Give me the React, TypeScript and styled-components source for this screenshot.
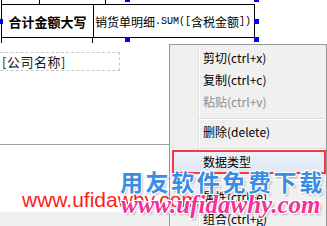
import React from 'react'
import styled, { createGlobalStyle, css } from 'styled-components'

const GlobalStyle = createGlobalStyle`
  html, body {
    margin: 0;
    padding: 0;
    background: #ffffff;
  }
  body {
    width: 327px;
    height: 226px;
    overflow: hidden;
    font-family: "Noto Sans CJK SC", sans-serif;
  }
`

const Page = styled.div`
  position: relative;
  width: 327px;
  height: 226px;
  overflow: hidden;
  background: #ffffff;
`

const Canvas = styled.div`
  display: flex;
  flex-direction: column;
  height: 100%;
`

const Table = styled.div`
  position: relative;
  margin-left: 1px;
  width: 254px;
`

const StubRow = styled.div`
  display: flex;
  height: ${(p: { $h: number }) => p.$h}px;
`

const Stub = styled.div`
  width: ${(p: { $w: number }) => p.$w}px;
  border-left: 1px solid #000;
  box-sizing: border-box;
`

const Row = styled.div`
  display: flex;
  height: 34px;
  box-sizing: border-box;
  border: 1px solid #000;
`

const Cell = styled.div`
  display: flex;
  align-items: center;
  color: #000;
  white-space: nowrap;
  ${(p: { $label?: boolean }) =>
    p.$label
      ? css`
          width: 91px;
          justify-content: center;
          border-right: 1px solid #000;
          font-size: 13px;
          font-weight: bold;
        `
      : css`
          flex: 1;
          padding-left: 1px;
          font-size: 12px;
        `}
`

const Half = styled.span`
  font-family: "Liberation Mono", monospace;
  font-size: 10px;
`

const Handle = styled.div`
  position: absolute;
  width: 5px;
  height: 5px;
  background: #0000ff;
  left: ${(p: { $x: number; $y: number }) => p.$x}px;
  top: ${(p: { $x: number; $y: number }) => p.$y}px;
`

const CompanyField = styled.div`
  display: flex;
  align-items: center;
  margin: 9px 0 0 -10px;
  padding-left: 11px;
  width: 130px;
  height: 19px;
  box-sizing: border-box;
  border: 1px dashed #c8c8c8;
  font-size: 13px;
  color: #1a1a1a;
  letter-spacing: 0.5px;
`

const Rule = styled.div`
  margin-top: 73px;
  border-top: 1px solid #a0a0a0;
`

const Blank = styled.div`
  flex: 1;
`

const StatusStrip = styled.div`
  height: 14px;
  background: #f0f0f0;
`

const Menu = styled.div`
  position: absolute;
  left: 169px;
  top: 44px;
  width: 158px;
  height: 200px;
  box-sizing: border-box;
  padding: 2px;
  background: #f0f0f0;
  border: 1px solid #979797;
  font-size: 12px;

  &::before {
    content: '';
    position: absolute;
    top: 2px;
    bottom: 2px;
    left: 28px;
    width: 1px;
    background: #e2e3e3;
    box-shadow: 1px 0 0 #ffffff;
  }
`

const Item = styled.div`
  position: relative;
  height: 22px;
  line-height: 22px;
  padding-left: 31px;
  white-space: nowrap;
  color: ${(p: { $disabled?: boolean; $active?: boolean }) =>
    p.$disabled ? '#8d8d8d' : '#000'};
  ${(p) =>
    p.$active &&
    css`
      margin: 0 -1px 0 1px;
      padding-left: 30px;
      background: linear-gradient(#edf2fa, #dfe8f5);
      outline: 2px solid #f43a3a;
      outline-offset: -1px;
    `}
`

const Separator = styled.div`
  position: relative;
  height: ${(p: { $h?: number }) => p.$h ?? 8}px;
  margin-left: 27px;

  &::after {
    content: '';
    position: absolute;
    left: 0;
    right: 0;
    top: 5px;
    height: 1px;
    background: #dcdcdc;
    box-shadow: 0 1px 0 #ffffff;
  }
`

const Watermarks = styled.div`
  position: absolute;
  inset: 0;
  pointer-events: none;
`

const Mark = styled.div`
  position: absolute;
  white-space: nowrap;
  line-height: 1;
  left: ${(p: { $x: number; $y: number }) => p.$x}px;
  top: ${(p: { $x: number; $y: number }) => p.$y}px;
`

const SiteRed = styled(Mark)`
  font-family: "Liberation Sans", Arial, sans-serif;
  font-size: 21px;
  color: #ff1c1c;
`

const outline = (c: string) => css`
  text-shadow: 1px 0 0 ${c}, -1px 0 0 ${c}, 0 1px 0 ${c}, 0 -1px 0 ${c},
    1px 1px 0 ${c}, -1px -1px 0 ${c}, 1px -1px 0 ${c}, -1px 1px 0 ${c},
    2px 2px 2px rgba(0, 0, 0, 0.25);
`

const Slogan = styled(Mark)`
  font-family: "Noto Sans CJK SC", sans-serif;
  font-size: 23px;
  font-weight: bold;
  letter-spacing: 2.6px;
  color: #3a8de3;
  ${outline('#ffffff')}
`

const SitePink = styled(Mark)`
  font-family: "Liberation Serif", "Times New Roman", serif;
  font-style: italic;
  font-weight: bold;
  font-size: 25px;
  color: #f0339a;
  ${outline('#ffffff')}
`

type MenuEntry = { label?: string; disabled?: boolean; active?: boolean; sep?: number }

const menuItems: MenuEntry[] = [
  { label: '剪切(ctrl+x)' },
  { label: '复制(ctrl+c)' },
  { label: '粘贴(ctrl+v)', disabled: true },
  { sep: 8 },
  { label: '删除(delete)' },
  { sep: 8 },
  { label: '数据类型', active: true },
  { sep: 13 },
  { label: '属性(ctrl+e)' },
  { label: '组合(ctrl+g)' },
]

export default function App() {
  return (
    <Page>
      <GlobalStyle />
      <Canvas>
        <Table>
          <StubRow $h={4}>
            <Stub $w={38} />
            <Stub $w={66} />
            <Stub $w={150} />
          </StubRow>
          <Row>
            <Cell $label>合计金额大写</Cell>
            <Cell>
              销货单明细<Half>.SUM([</Half>含税金额<Half>])</Half>
            </Cell>
          </Row>
          <StubRow $h={5}>
            <Stub $w={91} />
            <Stub $w={10} />
          </StubRow>
          <Handle $x={124} $y={-3} />
          <Handle $x={253} $y={-3} />
          <Handle $x={-3} $y={19} />
          <Handle $x={253} $y={19} />
          <Handle $x={124} $y={37} />
          <Handle $x={253} $y={37} />
        </Table>
        <CompanyField>[公司名称]</CompanyField>
        <Rule />
        <Blank />
        <StatusStrip />
      </Canvas>

      <Menu>
        {menuItems.map((m, i) =>
          m.sep ? (
            <Separator key={i} $h={m.sep} />
          ) : (
            <Item key={i} $disabled={m.disabled} $active={m.active}>
              {m.label}
            </Item>
          )
        )}
      </Menu>

      <Watermarks>
        <SiteRed $x={22} $y={189}>www.ufidawhy.com</SiteRed>
        <Slogan $x={120} $y={170}>用友软件免费下载</Slogan>
        <SitePink $x={121} $y={192}>www.ufidawhy.com</SitePink>
      </Watermarks>
    </Page>
  )
}
